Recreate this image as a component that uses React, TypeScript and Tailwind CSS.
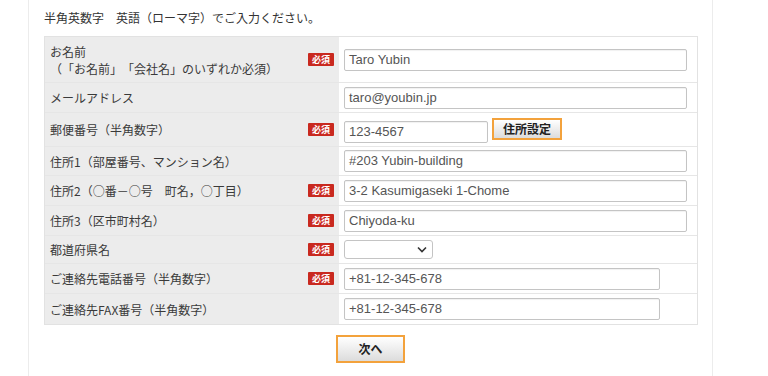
import React from 'react';

type Row = {
  label: React.ReactNode;
  required?: boolean;
  value?: string;
  kind?: 'text' | 'short' | 'postal' | 'select';
  h: string;
};

const rows: Row[] = [
  {
    label: (
      <>
        <div>お名前</div>
        <div>（「お名前」「会社名」のいずれか必須）</div>
      </>
    ),
    required: true,
    value: 'Taro Yubin',
    h: 'h-[46px]',
  },
  { label: 'メールアドレス', value: 'taro@youbin.jp', h: 'h-[30px]' },
  { label: '郵便番号（半角数字）', required: true, value: '123-4567', kind: 'postal', h: 'h-[34px]' },
  { label: '住所1（部屋番号、マンション名）', value: '#203 Yubin-building', h: 'h-[29px]' },
  { label: '住所2（○番－○号　町名，○丁目）', required: true, value: '3-2 Kasumigaseki 1-Chome', h: 'h-[30px]' },
  { label: '住所3（区市町村名）', required: true, value: 'Chiyoda-ku', h: 'h-[30px]' },
  { label: '都道府県名', required: true, kind: 'select', h: 'h-[28px]' },
  { label: 'ご連絡先電話番号（半角数字）', required: true, value: '+81-12-345-678', kind: 'short', h: 'h-[30px]' },
  { label: 'ご連絡先FAX番号（半角数字）', value: '+81-12-345-678', kind: 'short', h: 'h-[30px]' },
];

const cjk = '"Noto Sans CJK JP", "Liberation Sans", sans-serif';

const Field = ({ value, width }: { value?: string; width: string }) => (
  <div
    className={`${width} h-[22px] flex items-center px-[4px] border border-[#c4c4c4] rounded-[2px] bg-white text-[13px] text-[#555] shadow-[inset_0_1px_1px_rgba(0,0,0,0.06)]`}
  >
    {value}
  </div>
);

const OrangeButton = ({ children, size }: { children: React.ReactNode; size: string }) => (
  <div
    className={`${size} flex items-center justify-center border-2 border-[#f3a23c] bg-gradient-to-b from-white to-[#dcdcdc] text-[12px] font-bold text-[#222]`}
    style={{ fontFamily: cjk }}
  >
    {children}
  </div>
);

export default function App() {
  return (
    <div
      className="w-[768px] h-[376px] bg-white overflow-hidden text-[#333] [text-spacing-trim:space-all]"
      style={{ fontFamily: '"Liberation Sans", "Noto Sans CJK JP", sans-serif' }}
    >
      <div className="ml-[28px] w-[685px] h-full border-x border-[#ececec] pl-[15px] pt-[9px]">
        <p className="text-[12px] leading-[17px]" style={{ fontFamily: cjk }}>
          半角英数字　英語（ローマ字）でご入力ください。
        </p>

        <div className="mt-[10px] w-[654px] border border-[#e2e2e2]">
          {rows.map((r, i) => (
            <div key={i} className={`flex ${r.h} ${i < rows.length - 1 ? 'border-b border-[#e6e6e6]' : ''}`}>
              <div
                className="w-[294px] shrink-0 bg-[#ececec] flex items-center justify-between pl-[5px] pr-[5px] text-[12px] leading-[17px] text-[#3a3a3a]"
                style={{ fontFamily: cjk }}
              >
                <div>{r.label}</div>
                {r.required && (
                  <span className="w-[26px] h-[13px] flex items-center justify-center rounded-[1px] bg-[#c9291f] text-white text-[9px] font-bold leading-none">
                    必須
                  </span>
                )}
              </div>
              <div className="flex-1 flex items-center pl-[5px]">
                {r.kind === 'postal' ? (
                  <div className="flex items-end gap-[4px] mt-[2px]">
                    <Field value={r.value} width="w-[144px]" />
                    <OrangeButton size="w-[70px] h-[22px] mb-[3px]">住所設定</OrangeButton>
                  </div>
                ) : r.kind === 'select' ? (
                  <div className="w-[89px] h-[19px] border border-[#c4c4c4] rounded-[3px] bg-white flex items-center justify-end pr-[5px]">
                    <svg width="10" height="7" viewBox="0 0 10 7" fill="none">
                      <path d="M1 1.5 5 5.5 9 1.5" stroke="#333" strokeWidth="1.6" />
                    </svg>
                  </div>
                ) : r.kind === 'short' ? (
                  <Field value={r.value} width="w-[316px]" />
                ) : (
                  <Field value={r.value} width="w-[343px]" />
                )}
              </div>
            </div>
          ))}
        </div>

        <div className="flex mt-[10px] pl-[292px]">
          <OrangeButton size="w-[69px] h-[28px]">次へ</OrangeButton>
        </div>
      </div>
    </div>
  );
}
